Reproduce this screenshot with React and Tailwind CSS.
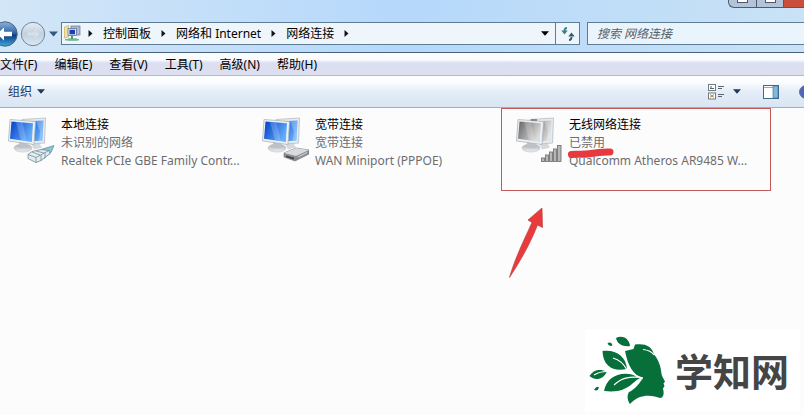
import React from 'react'

const menus = ['文件(F)', '编辑(E)', '查看(V)', '工具(T)', '高级(N)', '帮助(H)']
const crumbs = ['控制面板', '网络和 Internet', '网络连接']

const connections = [
  { id: 'lan', name: '本地连接', status: '未识别的网络', device: 'Realtek PCIe GBE Family Contr...' },
  { id: 'wan', name: '宽带连接', status: '宽带连接', device: 'WAN Miniport (PPPOE)' },
  { id: 'wifi', name: '无线网络连接', status: '已禁用', device: 'Qualcomm Atheros AR9485 W...', disabled: true },
]

const CrumbArrow = () => (
  <svg className="h-[7px] w-[5px] shrink-0" viewBox="0 0 5 7" aria-hidden="true">
    <path d="M0.5 0v7L4.5 3.5z" fill="#10151c" />
  </svg>
)

const DownArrow = ({ className }) => (
  <svg className={className} viewBox="0 0 8 5" aria-hidden="true">
    <path d="M0 0.3h8L4 4.7z" fill="currentColor" />
  </svg>
)

const NavButtons = () => (
  <div className="-ml-2 flex items-center">
    <button type="button" aria-label="后退" className="h-[26px] w-[26px]">
      <svg viewBox="0 0 26 26">
        <defs>
          <linearGradient id="back" x1="0" y1="0" x2="0" y2="1">
            <stop offset="0" stopColor="#8fb4d8" />
            <stop offset="0.45" stopColor="#2f66a8" />
            <stop offset="0.55" stopColor="#0d3c80" />
            <stop offset="1" stopColor="#3fa9e0" />
          </linearGradient>
        </defs>
        <circle cx="13" cy="13" r="12.2" fill="url(#back)" stroke="#47637f" />
        <path d="M5 13l7-6.5v4.2h8v4.6h-8v4.2z" fill="#fff" />
      </svg>
    </button>
    <button type="button" aria-label="前进" className="ml-[2px] h-[26px] w-[26px]">
      <svg viewBox="0 0 26 26">
        <defs>
          <linearGradient id="fwd" x1="0" y1="0" x2="0" y2="1">
            <stop offset="0" stopColor="#e6edf5" />
            <stop offset="0.5" stopColor="#c3d0de" />
            <stop offset="1" stopColor="#dbe8f5" />
          </linearGradient>
        </defs>
        <circle cx="13" cy="13" r="11.7" fill="url(#fwd)" stroke="#71869c" />
        <path d="M20 13l-6-6v4H7v4h7v4z" fill="#d5dfe9" stroke="#c3cfdb" strokeWidth="0.5" />
      </svg>
    </button>
    <button type="button" aria-label="最近的页面" className="ml-[3px] flex w-[9px] justify-center text-[#35597e]">
      <DownArrow className="h-[6px] w-[9px]" />
    </button>
  </div>
)

const NetworkFolderIcon = () => (
  <svg className="h-[17px] w-[17px] shrink-0" viewBox="0 0 17 17" aria-hidden="true">
    <path d="M0.5 2l4-1.5V12L0.5 13z" fill="#f3e39a" stroke="#b5a765" strokeWidth="0.6" />
    <rect x="7" y="1" width="9" height="9" fill="#a9b6dd" stroke="#6a74a3" strokeWidth="0.7" />
    <rect x="4" y="3.5" width="8.5" height="7" fill="#e3e9f3" stroke="#5d687f" strokeWidth="0.7" />
    <rect x="5.5" y="4.8" width="5.5" height="4.5" fill="#1d3fb4" />
    <path d="M8 11v3M4 14.5h9" stroke="#4f9a78" strokeWidth="2" />
    <rect x="1" y="14" width="14" height="1.5" fill="#71b696" />
  </svg>
)

const RefreshIcon = () => (
  <svg className="h-[14px] w-[14px]" viewBox="0 0 14 14" fill="none" aria-hidden="true">
    <path d="M6 1C4 1 3.5 2.500 3.5 4" stroke="#3c7f8c" strokeWidth="1.8" />
    <path d="M0.3 3.600h6.400L3.500 7.600z" fill="#3c7f8c" />
    <path d="M8 13c2 0 2.500-1.500 2.500-3" stroke="#34596f" strokeWidth="1.8" />
    <path d="M7.300 9.600h6.400L10.500 5.600z" fill="#34596f" />
  </svg>
)

const ConnectionIcon = ({ id, disabled }) => {
  const screen = disabled ? ['#707070', '#dcdcdc'] : ['#0a49cc', '#64aefa']
  return (
    <svg className="h-[48px] w-[50px] shrink-0" viewBox="0 0 50 48" aria-hidden="true">
      <defs>
        <linearGradient id={`screen-${id}`} x1="0" y1="0" x2="1" y2="0.5">
          <stop offset="0.1" stopColor={screen[0]} />
          <stop offset="1" stopColor={screen[1]} />
        </linearGradient>
        <linearGradient id={`base-${id}`} x1="0" y1="0" x2="0" y2="1">
          <stop offset="0" stopColor="#a5aab0" />
          <stop offset="1" stopColor="#f0f2f4" />
        </linearGradient>
      </defs>
      <path d="M26 27l8-.5 3 5-8 2z" fill="#d5d9dd" />
      <path d="M17 3.5l23.5-1.5-1 25-13 1z" fill="#e7ebef" stroke="#b4bcc4" strokeWidth="0.8" />
      <path d="M20 5.5l18.5-1L37.5 24.5l-10 .8z" fill={`url(#screen-${id})`} />
      <path d="M31 5l4 10-1 9.5 3.5-.5 1-19.5z" fill="#fff" opacity="0.25" />
      <ellipse cx="18" cy="32" rx="9" ry="4" fill={`url(#base-${id})`} stroke="#b9bec3" strokeWidth="0.6" />
      <path d="M14 25l8 2v5h-8z" fill="#bcc2c8" />
      <path d="M5 3.5l25.5 2L29 28.5L3.5 25z" fill="#edf1f4" stroke="#adb5bd" strokeWidth="0.8" />
      <path d="M6.5 5.5l21.5 1.8-1.2 18.7L5 22.8z" fill={`url(#screen-${id})`} />
      <path d="M11 6l6.5.5L22 25.3l-6-1z" fill="#fff" opacity="0.18" />
      {id === 'lan' && (
        <g strokeLinejoin="round">
          <path d="M36 33.5l13-4-3 7-7 6z" fill="#86c6d6" stroke="#5a8fa0" strokeWidth="0.7" />
          <path d="M23 38.500l4-3 9-2 8 1 1 3-9 7-5 2-8-4z" fill="#e3ecef" stroke="#718b98" strokeWidth="0.8" />
          <path d="M23 38.5l8 3 13-7M31 41.5v5M27 36l8 3M31 35l8 2M36 39v6M40 36.500v5" fill="none" stroke="#75909d" strokeWidth="0.8" />
        </g>
      )}
      {id === 'wan' && (
        <g strokeLinejoin="round">
          <path d="M25 37l12-5 13 2v4l-14 7-11-4z" fill="#8b8e91" stroke="#6e7174" strokeWidth="0.6" />
          <path d="M25 37l12-5 13 2-13 6z" fill="#d9dadb" />
          <path d="M27 39.5l8 2.2v1.8l-8-2.5z" fill="#3b3e41" />
          <path d="M39 41l9-4.5" stroke="#d4d6d8" />
        </g>
      )}
      {id === 'wifi' && (
        <g fill="#b7b7b7" stroke="#777" strokeWidth="0.9">
          <path d="M18 3h6v2h-6z" stroke="none" fill="#888" />
          <rect x="28.5" y="42" width="3" height="3.5" />
          <rect x="32.5" y="39" width="3" height="6.5" />
          <rect x="36.5" y="36" width="3" height="9.5" />
          <rect x="40.5" y="33" width="3" height="12.5" />
          <rect x="44.5" y="29.5" width="3.5" height="16" />
        </g>
      )}
    </svg>
  )
}

// red pen marks around the disabled adapter
const Annotation = () => (
  <>
    <div className="pointer-events-none absolute -left-3 top-0 h-[83px] w-[270px] border border-[#c25a5a]"></div>
    <svg className="pointer-events-none absolute left-[54px] top-[39px] h-[12px] w-[48px]" viewBox="0 0 48 12" aria-hidden="true">
      <path d="M4.5 7.5C10 6.5 14 8 22 6.7S36 4.8 43 5" fill="none" stroke="#e73a3f" strokeWidth="7" strokeLinecap="round" />
    </svg>
    <svg className="pointer-events-none absolute -left-1 top-[100px] h-[72px] w-[36px]" viewBox="0 0 36 72" aria-hidden="true">
      <path d="M33 0L19 12l4 2.5C16 30 6 50 0.5 69.5C12 52 22 34 28.5 17l5 2.5z" fill="#e93a3c" stroke="#b94343" strokeWidth="0.7" />
    </svg>
  </>
)

const Watermark = () => (
  <div className="absolute bottom-[3px] right-1 flex h-[83px] w-[215px] items-center bg-white">
    <svg className="h-[83px] w-[88px] shrink-0" viewBox="0 0 88 83" fill="#07703a" aria-hidden="true">
      <path d="M40 22L48.500 20L50 15.500C60 14 67 17 69 25.500C73 30 76 37 76.500 45C77 48 79 50 80 52.500L78.500 54.500L79.500 57L78 59.500L78.500 62C79 66 78 69 75 69C68 66 54 64 45 75C42 71 42 66 44 63C47 62 53 57 58 49C48 46 43 37 40 22z" />
      <path d="M31 9C37 6 44 9 45 17C38 18 32 15 31 9z" />
      <path d="M17.5 22C30 20 41 27 42 40C29 43 18 38 17.5 22z" />
      <path d="M19 62C22 47 37 40 56 48.500C47 52 44 65 19 62z" />
      <path d="M4.5 47C9 40 15 40 22 42.5C18 51 10 52 4.500 47z" />
      <path d="M22.5 14q4-2 5 2.5q-4 1.500-5-2.500zM9 61q3-5 5-2.500q-1 4-5 2.500z" />
      <path d="M28 29C35 31 39 35 42 41M29 56C36 49 44 47 57 48.500M9 46C13 43.500 17 42.500 22 42.500M58 20.500C63 21 67 23 69 26M41 41C47 45 52 48 58 49" fill="none" stroke="#fff" strokeWidth="1.2" />
    </svg>
    <div className="ml-[2px] pb-[1px] font-['Noto_Sans_CJK_SC',sans-serif] text-[38px] font-bold leading-[44px] text-[#454545]">学知网</div>
  </div>
)

const App = () => {
  return (
    <div className="relative flex min-h-screen flex-col overflow-hidden bg-[#fcfcfd] font-['Noto_Sans','Noto_Sans_CJK_SC',sans-serif] text-[12px] leading-[18px] text-black">
      <header className="relative border-b border-[#47627c] bg-linear-to-r from-[#d3e6f7] via-[#b5d8fb] to-[#c9e2f5] pb-[7px] pt-[22px]">
        <div className="absolute right-0 top-0 flex h-[8px] overflow-hidden rounded-bl-md border-b border-l border-[#4c5c70] bg-[#b5c3d8]">
          <button type="button" aria-label="最小化" className="flex w-[28px] justify-center border-r border-[#4c5c70]">
            <span className="h-[3px] w-[11px] border border-t-0 border-[#4d5870] bg-white"></span>
          </button>
          <button type="button" aria-label="最大化" className="flex w-[27px] justify-center border-r border-[#4c5c70]">
            <span className="h-[3px] w-[11px] border border-t-0 border-[#4d5870] bg-white"></span>
          </button>
          <button type="button" aria-label="关闭" className="w-[20px] bg-[#c94f3c]"></button>
        </div>

        <div className="flex h-[23px] items-center">
          <NavButtons />
          <div className="ml-[3px] flex h-full flex-1 items-center border border-[#5f7c96] bg-[#eff6fb] pl-[2px]">
            <NetworkFolderIcon />
            <nav className="ml-[7px] flex flex-1 items-center gap-[10px] whitespace-nowrap">
              {crumbs.map((crumb) => (
                <React.Fragment key={crumb}>
                  <CrumbArrow />
                  <a href="#">{crumb}</a>
                </React.Fragment>
              ))}
              <CrumbArrow />
            </nav>
            <button type="button" aria-label="历史记录" className="flex h-full w-[20px] items-center justify-center">
              <DownArrow className="h-[5px] w-[8px]" />
            </button>
            <button type="button" aria-label="刷新" className="flex h-full w-[24px] items-center justify-center border-l border-[#5f7c96]">
              <RefreshIcon />
            </button>
          </div>
          <input
            type="text"
            aria-label="搜索"
            placeholder="搜索 网络连接"
            className="ml-[7px] h-full w-[217px] border border-r-0 border-[#5f7c96] bg-[#eaf4fc] pl-[9px] italic placeholder:text-[#5a626a]"
          />
        </div>
      </header>

      <nav className="flex h-[23px] items-center gap-[17px] border-b border-[#b4b8c8] bg-linear-to-b from-[#fafcff] from-30% to-[#dcdff0] to-45% pt-[2px]">
        {menus.map((menu) => (
          <button key={menu} type="button" className="whitespace-nowrap">{menu}</button>
        ))}
      </nav>

      <div className="flex h-[32px] items-center border-b border-[#a3aec0] bg-linear-to-b from-[#fbfdff] from-20% via-[#e4edf8] via-50% to-[#dae5f3] pl-2 text-[#1e395b]">
        <button type="button" className="flex items-center gap-[5px]">
          组织
          <DownArrow className="h-[5px] w-[8px]" />
        </button>
        <div className="ml-auto flex items-center">
          <button type="button" aria-label="更改视图" className="flex items-center gap-[9px]">
            <svg className="h-[16px] w-[16px]" viewBox="0 0 16 16" aria-hidden="true">
              <rect x="0.5" y="0.5" width="7" height="6" fill="#fff" stroke="#6f7b86" />
              <path d="M2 4.5h4M2 3h2" stroke="#466b56" />
              <rect x="0.5" y="9" width="7" height="6" fill="#fff" stroke="#6f7b86" />
              <path d="M2 10.5l4 3M6 10.5l-4 3" stroke="#a88a34" />
              <path d="M10 2.5h6M10 4.5h4M10 10.5h6M10 12.5h4" stroke="#5b6671" />
            </svg>
            <DownArrow className="h-[5px] w-[8px]" />
          </button>
          <button type="button" aria-label="预览窗格" className="ml-[22px]">
            <svg className="h-[14px] w-[16px]" viewBox="0 0 16 14" aria-hidden="true">
              <rect x="0.5" y="0.5" width="15" height="13" fill="#fff" stroke="#3f6a90" />
              <path d="M1 2.5h9" stroke="#8fadc8" />
              <rect x="10" y="1" width="5" height="12" fill="#80badb" stroke="#3f6a90" strokeWidth="0.6" />
            </svg>
          </button>
          <button type="button" aria-label="帮助" className="ml-[20px] w-[5px] overflow-hidden">
            <svg className="h-[14px] w-[14px]" viewBox="0 0 14 14" aria-hidden="true">
              <circle cx="7" cy="7" r="6.4" fill="#4d65bd" stroke="#5d6796" />
            </svg>
          </button>
        </div>
      </div>

      <main className="flex flex-1 items-start pl-[5px]">
        {connections.map((item) => (
          <section key={item.id} className="relative flex w-[254px] shrink-0 pt-2">
            <ConnectionIcon id={item.id} disabled={item.disabled} />
            <div className="ml-[6px] whitespace-nowrap text-[#6d6d6d]">
              <h2 className="text-black">{item.name}</h2>
              <p>{item.status}</p>
              <p>{item.device}</p>
            </div>
            {item.disabled && <Annotation />}
          </section>
        ))}
      </main>

      <Watermark />
    </div>
  )
}

export default App
